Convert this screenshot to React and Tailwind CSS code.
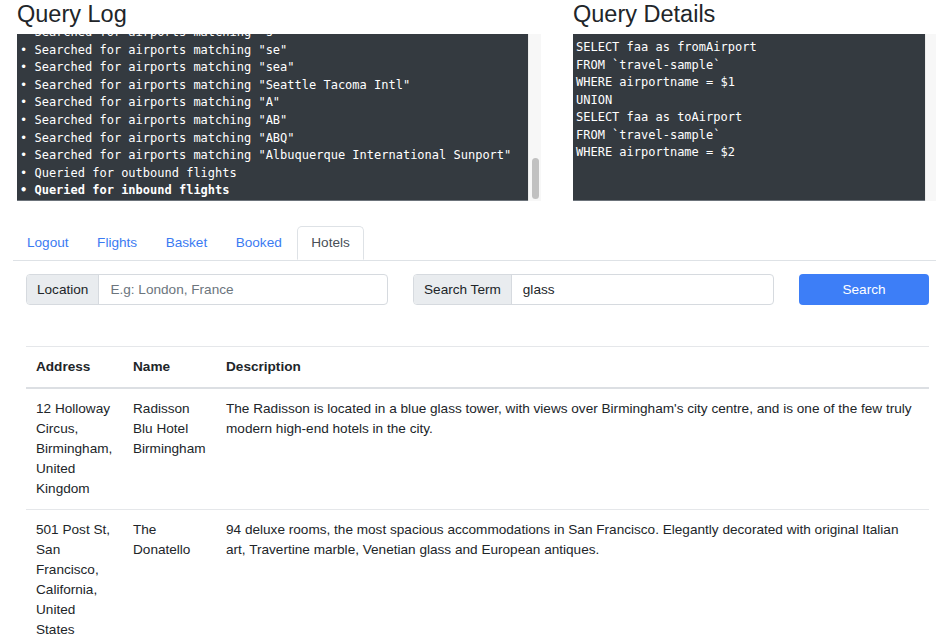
import React from "react";

const logLines = [
  'Searched for airports matching "s"',
  'Searched for airports matching "se"',
  'Searched for airports matching "sea"',
  'Searched for airports matching "Seattle Tacoma Intl"',
  'Searched for airports matching "A"',
  'Searched for airports matching "AB"',
  'Searched for airports matching "ABQ"',
  'Searched for airports matching "Albuquerque International Sunport"',
  "Queried for outbound flights",
];

const queryLines = [
  "SELECT faa as fromAirport",
  "FROM `travel-sample`",
  "WHERE airportname = $1",
  "UNION",
  "SELECT faa as toAirport",
  "FROM `travel-sample`",
  "WHERE airportname = $2",
];

const rows = [
  {
    address: "12 Holloway Circus, Birmingham, United Kingdom",
    name: "Radisson Blu Hotel Birmingham",
    desc: "The Radisson is located in a blue glass tower, with views over Birmingham's city centre, and is one of the few truly modern high-end hotels in the city.",
  },
  {
    address: "501 Post St, San Francisco, California, United States",
    name: "The Donatello",
    desc: "94 deluxe rooms, the most spacious accommodations in San Francisco. Elegantly decorated with original Italian art, Travertine marble, Venetian glass and European antiques.",
  },
];

function Tab({ label, active }) {
  if (active) {
    return (
      <div className="h-[34px] px-[13px] py-[6px] leading-[20px] border border-[#dee2e6] border-b-white rounded-t-[5px] bg-white text-[#495057] -mb-px">
        {label}
      </div>
    );
  }
  return (
    <div className="h-[34px] px-[13px] py-[7px] leading-[20px] text-[#3b7bf2]">
      {label}
    </div>
  );
}

export default function App() {
  return (
    <div className="w-[936px] h-[638px] overflow-hidden bg-white text-[#212529] font-['Liberation_Sans',Arial,sans-serif] text-[13.6px]">
      {/* Top panels */}
      <div className="flex pl-[17px]">
        <div className="w-[524px] shrink-0">
          <h3 className="text-[23.5px] leading-[28px] font-medium mb-[6px]">Query Log</h3>
          <div className="flex h-[167px]">
            <div className="flex-1 overflow-hidden bg-[#343a40] border-b border-[#6c737a] text-white font-['DejaVu_Sans_Mono',monospace] text-[12px] leading-[17.6px] pl-[3px]">
              <div className="-mt-[10px] whitespace-pre">
                {logLines.map((l, i) => (
                  <div key={i}>• {l}</div>
                ))}
                <div className="font-bold">• Queried for inbound flights</div>
              </div>
            </div>
            <div className="w-[13px] bg-[#f7f7f7] border-l border-[#ececec] flex flex-col justify-end items-center pb-[2px]">
              <div className="w-[7px] h-[41px] rounded-full bg-[#c1c1c1]"></div>
            </div>
          </div>
        </div>
        <div className="ml-[32px] w-[363px] shrink-0">
          <h3 className="text-[23.5px] leading-[28px] font-medium mb-[6px]">Query Details</h3>
          <div className="flex h-[167px]">
            <div className="w-[352px] bg-[#343a40] border-b border-[#6c737a] text-white font-['DejaVu_Sans_Mono',monospace] text-[12px] leading-[17.5px] pl-[3px] pt-[5px] whitespace-pre">
              {queryLines.map((l, i) => (
                <div key={i}>{l}</div>
              ))}
            </div>
            <div className="flex-1 bg-[#f7f7f7] border-l border-[#ececec]"></div>
          </div>
        </div>
      </div>

      {/* Tabs */}
      <div className="mt-[25px] ml-[13px] flex gap-[2.5px] pl-[1px] border-b border-[#dee2e6]">
        <Tab label="Logout" />
        <Tab label="Flights" />
        <Tab label="Basket" />
        <Tab label="Booked" />
        <Tab label="Hotels" active />
      </div>

      {/* Search form */}
      <div className="mt-[13px] ml-[26px] flex items-center">
        <div className="w-[362px] h-[31px] flex border border-[#d6dadf] rounded-[4px] overflow-hidden">
          <div className="bg-[#e9ecef] border-r border-[#d6dadf] px-[10px] leading-[29px] text-[#212529]">Location</div>
          <div className="flex-1 px-[11px] leading-[29px] text-[#6c757d]">E.g: London, France</div>
        </div>
        <div className="ml-[25px] w-[361px] h-[31px] flex border border-[#d6dadf] rounded-[4px] overflow-hidden">
          <div className="bg-[#e9ecef] border-r border-[#d6dadf] px-[10px] leading-[29px] text-[#212529]">Search Term</div>
          <div className="flex-1 px-[11px] leading-[29px] text-[#212529]">glass</div>
        </div>
        <div className="ml-[25px] w-[130px] h-[31px] rounded-[4px] bg-[#3d7ef7] text-white text-center leading-[31px]">
          Search
        </div>
      </div>

      {/* Table */}
      <table className="mt-[41px] ml-[26px] w-[903px] table-fixed border-collapse leading-[20px]">
        <colgroup>
          <col className="w-[97px]" />
          <col className="w-[93px]" />
          <col />
        </colgroup>
        <thead>
          <tr className="border-t border-[#e5e7ea]">
            <th className="text-left font-bold p-[10px] border-b-2 border-[#dcdfe3]">Address</th>
            <th className="text-left font-bold p-[10px] border-b-2 border-[#dcdfe3]">Name</th>
            <th className="text-left font-bold p-[10px] border-b-2 border-[#dcdfe3]">Description</th>
          </tr>
        </thead>
        <tbody>
          {rows.map((r, i) => (
            <tr key={i} className="border-b border-[#e5e7ea] align-top">
              <td className="p-[10px]">{r.address}</td>
              <td className="p-[10px]">{r.name}</td>
              <td className="p-[10px]">{r.desc}</td>
            </tr>
          ))}
        </tbody>
      </table>
    </div>
  );
}
